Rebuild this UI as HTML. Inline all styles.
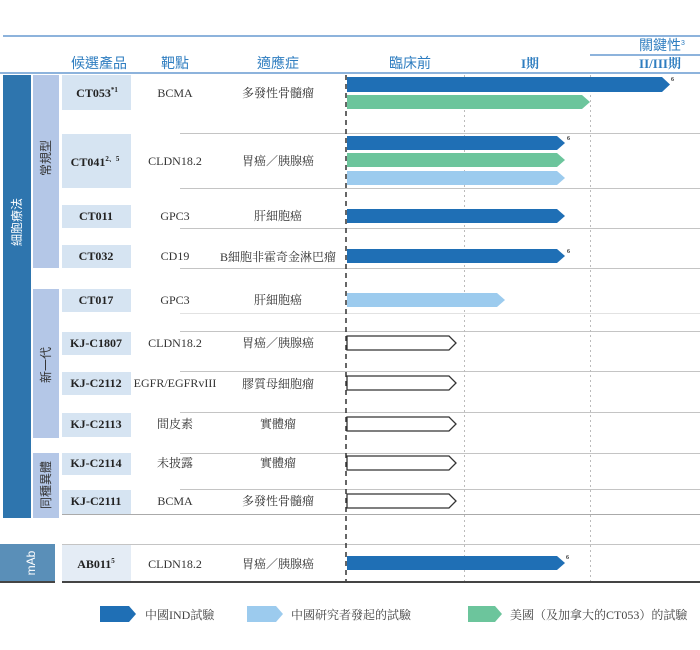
<!DOCTYPE html>
<html><head><meta charset="utf-8"><style>
html,body{margin:0;padding:0;background:#fff;width:700px;height:650px;overflow:hidden}
svg{display:block}
.h{font-family:"Liberation Sans","Noto Sans CJK TC",sans-serif;font-size:14px;fill:#2e7dc0;text-anchor:middle}
.hs{font-family:"Liberation Serif","Noto Serif CJK SC",serif;font-size:13px;fill:#2e7dc0;text-anchor:middle;font-weight:bold}
.p{font-family:"Liberation Serif","Noto Serif CJK SC",serif;font-size:12px;font-weight:bold;fill:#222;text-anchor:middle}
.t{font-family:"Liberation Serif","Noto Serif CJK SC",serif;font-size:12px;fill:#333;text-anchor:middle}
.v{font-family:"Liberation Sans","Noto Sans CJK TC",sans-serif;font-size:12px;fill:#fff;text-anchor:middle}
.vd{font-family:"Liberation Sans","Noto Sans CJK TC",sans-serif;font-size:12px;fill:#333;text-anchor:middle}
.l{font-family:"Liberation Serif","Noto Serif CJK SC",serif;font-size:12px;fill:#444}
.s{font-family:"Liberation Serif",serif;font-size:6px;font-weight:bold;fill:#333}
</style></head><body>
<svg width="700" height="650" viewBox="0 0 700 650">
<!-- top lines -->
<rect x="3" y="35" width="697" height="2" fill="#8db3dc"/>
<rect x="590" y="54" width="110" height="2" fill="#8db3dc"/>
<rect x="0" y="72" width="700" height="2" fill="#8db3dc"/>
<text class="h" x="99" y="68">候選產品</text>
<text class="h" x="175" y="68">靶點</text>
<text class="h" x="278" y="68">適應症</text>
<text class="h" x="410" y="68">臨床前</text>
<text class="hs" x="530" y="68">I期</text>
<text class="h" x="662" y="50">關鍵性<tspan font-size="7" dy="-5">3</tspan></text>
<text class="hs" x="660" y="68">II/III期</text>

<!-- left bars -->
<rect x="3" y="75" width="28" height="443" fill="#2e75ae"/>
<text class="v" transform="translate(21,222) rotate(-90)">細胞療法</text>
<rect x="33" y="75" width="26" height="193" fill="#b4c7e7"/>
<text class="vd" transform="translate(50,158) rotate(-90)">常規型</text>
<rect x="33" y="289" width="26" height="149" fill="#b4c7e7"/>
<text class="vd" transform="translate(50,365) rotate(-90)">新一代</text>
<rect x="33" y="453" width="26" height="65" fill="#b4c7e7"/>
<text class="vd" transform="translate(50,485) rotate(-90)">同種異體</text>
<rect x="0" y="544" width="55" height="38" fill="#5a8fb8"/>
<text class="v" transform="translate(35,563) rotate(-90)" font-family="Liberation Serif" font-size="14">mAb</text>
<rect x="0" y="581" width="55" height="2" fill="#444"/>

<!-- product cells -->
<g fill="#d6e4f2">
<rect x="62" y="75" width="69" height="35"/>
<rect x="62" y="134" width="69" height="54"/>
<rect x="62" y="205" width="69" height="23"/>
<rect x="62" y="245" width="69" height="23"/>
<rect x="62" y="289" width="69" height="23"/>
<rect x="62" y="332" width="69" height="23"/>
<rect x="62" y="372" width="69" height="23"/>
<rect x="62" y="413" width="69" height="24"/>
<rect x="62" y="453" width="69" height="22"/>
<rect x="62" y="490" width="69" height="24"/>
</g>
<rect x="62" y="545" width="69" height="36" fill="#e4ecf5"/>

<!-- row lines -->
<g fill="#c4c4c4">
<rect x="180" y="133" width="520" height="1"/>
<rect x="180" y="188" width="520" height="1"/>
<rect x="180" y="228" width="520" height="1"/>
<rect x="180" y="268" width="520" height="1"/>
<rect x="180" y="313" width="520" height="1" fill="#e2e2e2"/>
<rect x="180" y="331" width="520" height="1"/>
<rect x="180" y="371" width="520" height="1"/>
<rect x="180" y="412" width="520" height="1"/>
<rect x="180" y="453" width="520" height="1"/>
<rect x="180" y="489" width="520" height="1"/>
<rect x="62" y="514" width="638" height="1" fill="#aaa"/>
<rect x="62" y="544" width="638" height="1"/>
</g>
<rect x="62" y="581" width="638" height="2" fill="#444"/>

<!-- vertical lines -->
<line x1="346" y1="75" x2="346" y2="581" stroke="#333" stroke-width="1.5" stroke-dasharray="5,4"/>
<line x1="464.5" y1="75" x2="464.5" y2="581" stroke="#bbb" stroke-width="1" stroke-dasharray="2,3"/>
<line x1="590.5" y1="75" x2="590.5" y2="581" stroke="#bbb" stroke-width="1" stroke-dasharray="2,3"/>

<!-- text rows -->
<text class="p" x="97" y="97">CT053<tspan font-size="7" dy="-5">*1</tspan></text><text class="t" x="175" y="97">BCMA</text><text class="t" x="278" y="97">多發性骨髓瘤</text>
<text class="p" x="95" y="166">CT041<tspan font-size="7" dy="-5">2、5</tspan></text><text class="t" x="175" y="165">CLDN18.2</text><text class="t" x="278" y="165">胃癌／胰腺癌</text>
<text class="p" x="96" y="220">CT011</text><text class="t" x="175" y="220">GPC3</text><text class="t" x="278" y="220">肝細胞癌</text>
<text class="p" x="96" y="260">CT032</text><text class="t" x="175" y="260">CD19</text><text class="t" x="278" y="261">B細胞非霍奇金淋巴瘤</text>
<text class="p" x="96" y="304">CT017</text><text class="t" x="175" y="304">GPC3</text><text class="t" x="278" y="304">肝細胞癌</text>
<text class="p" x="96" y="347">KJ-C1807</text><text class="t" x="175" y="347">CLDN18.2</text><text class="t" x="278" y="347">胃癌／胰腺癌</text>
<text class="p" x="96" y="387">KJ-C2112</text><text class="t" x="175" y="387">EGFR/EGFRvIII</text><text class="t" x="278" y="388">膠質母細胞瘤</text>
<text class="p" x="96" y="428">KJ-C2113</text><text class="t" x="175" y="428">間皮素</text><text class="t" x="278" y="428">實體瘤</text>
<text class="p" x="96" y="467">KJ-C2114</text><text class="t" x="175" y="467">未披露</text><text class="t" x="278" y="467">實體瘤</text>
<text class="p" x="96" y="505">KJ-C2111</text><text class="t" x="175" y="505">BCMA</text><text class="t" x="278" y="505">多發性骨髓瘤</text>
<text class="p" x="96" y="568">AB011<tspan font-size="7" dy="-5">5</tspan></text><text class="t" x="175" y="568">CLDN18.2</text><text class="t" x="278" y="568">胃癌／胰腺癌</text>

<!-- bars -->
<g>
<polygon points="347,77 662,77 670,84.5 662,92 347,92" fill="#1f6fb5"/>
<polygon points="347,95 582,95 590,102 582,109 347,109" fill="#6cc59c"/>
<polygon points="347,136 557,136 565,143 557,150 347,150" fill="#1f6fb5"/>
<polygon points="347,153 557,153 565,160 557,167 347,167" fill="#6cc59c"/>
<polygon points="347,171 557,171 565,178 557,185 347,185" fill="#9ccbee"/>
<polygon points="347,209 557,209 565,216 557,223 347,223" fill="#1f6fb5"/>
<polygon points="347,249 557,249 565,256 557,263 347,263" fill="#1f6fb5"/>
<polygon points="347,293 497,293 505,300 497,307 347,307" fill="#9ccbee"/>
<polygon points="347,556 557,556 565,563 557,570 347,570" fill="#1f6fb5"/>
<g fill="#fff" stroke="#333" stroke-width="1.3">
<polygon points="347,336 449,336 456,343 449,350 347,350"/>
<polygon points="347,376 449,376 456,383 449,390 347,390"/>
<polygon points="347,417 449,417 456,424 449,431 347,431"/>
<polygon points="347,456 449,456 456,463 449,470 347,470"/>
<polygon points="347,494 449,494 456,501 449,508 347,508"/>
</g>
</g>
<text class="s" x="671" y="81">6</text>
<text class="s" x="567" y="140">6</text>
<text class="s" x="567" y="253">6</text>
<text class="s" x="566" y="559">6</text>

<!-- legend -->
<polygon points="100,606 129,606 136,614 129,622 100,622" fill="#1f6fb5"/>
<text class="l" x="145" y="619">中國IND試驗</text>
<polygon points="247,606 276,606 283,614 276,622 247,622" fill="#9ccbee"/>
<text class="l" x="291" y="619">中國研究者發起的試驗</text>
<polygon points="468,606 495,606 502,614 495,622 468,622" fill="#6cc59c"/>
<text class="l" x="510" y="619">美國（及加拿大的CT053）的試驗</text>
</svg>
</body></html>
